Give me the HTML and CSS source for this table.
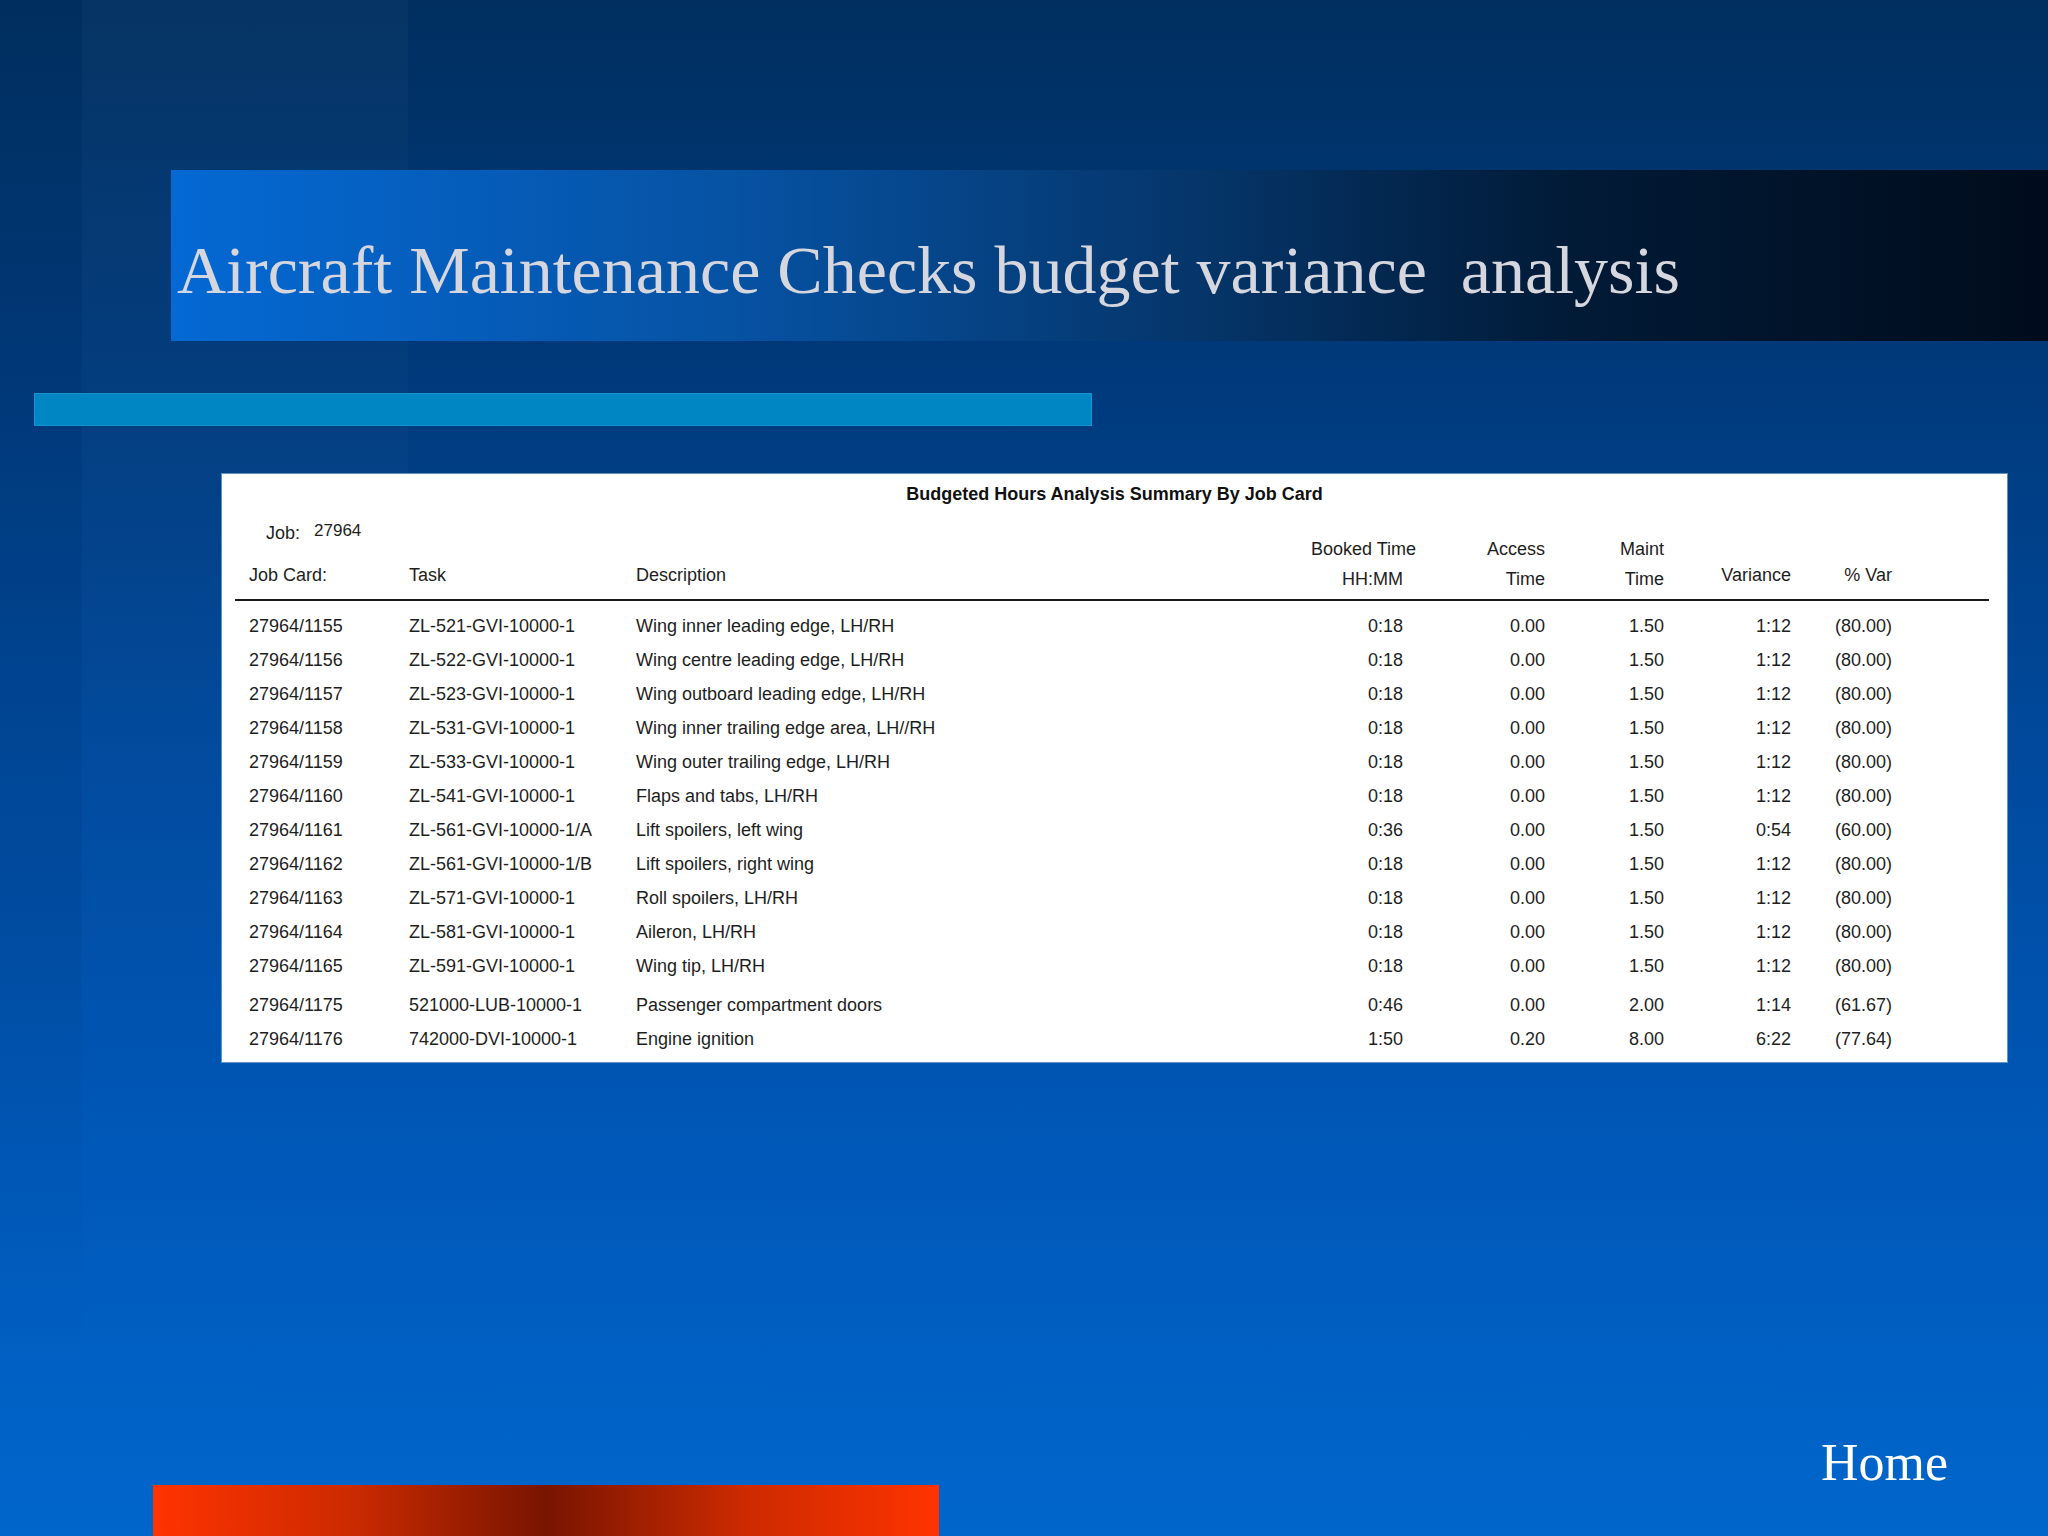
FILE: index.html
```html
<!DOCTYPE html>
<html>
<head>
<meta charset="utf-8">
<title>Aircraft Maintenance Checks budget variance analysis</title>
<link rel="stylesheet" href="styles.css">
</head>
<body>
<div class="slide">
  <div class="banner"><h1 class="title">Aircraft Maintenance Checks budget variance  analysis</h1></div>
  <div class="accent"></div>
  <div class="card">
    <div class="report-title">Budgeted Hours Analysis Summary By Job Card</div>
    <div class="head-grid">
      <div class="job"><span class="job-label">Job:</span><span class="job-no">27964</span></div>
      <div class="h1 c4 r"><span class="over">Booked Time</span></div>
      <div class="h1 c5 r">Access</div>
      <div class="h1 c6 r">Maint</div>
      <div class="h2 c1">Job Card:</div>
      <div class="h2 c2">Task</div>
      <div class="h2 c3">Description</div>
      <div class="h2 low c4 r">HH:MM</div>
      <div class="h2 low c5 r">Time</div>
      <div class="h2 low c6 r">Time</div>
      <div class="h2 c7 r">Variance</div>
      <div class="h2 c8 r">% Var</div>
    </div>
    <div class="rule"></div>
    <div class="rows">
      <div class="row"><span>27964/1155</span><span>ZL-521-GVI-10000-1</span><span>Wing inner leading edge, LH/RH</span><span class="r">0:18</span><span class="r">0.00</span><span class="r">1.50</span><span class="r">1:12</span><span class="r">(80.00)</span></div>
      <div class="row"><span>27964/1156</span><span>ZL-522-GVI-10000-1</span><span>Wing centre leading edge, LH/RH</span><span class="r">0:18</span><span class="r">0.00</span><span class="r">1.50</span><span class="r">1:12</span><span class="r">(80.00)</span></div>
      <div class="row"><span>27964/1157</span><span>ZL-523-GVI-10000-1</span><span>Wing outboard leading edge, LH/RH</span><span class="r">0:18</span><span class="r">0.00</span><span class="r">1.50</span><span class="r">1:12</span><span class="r">(80.00)</span></div>
      <div class="row"><span>27964/1158</span><span>ZL-531-GVI-10000-1</span><span>Wing inner trailing edge area, LH//RH</span><span class="r">0:18</span><span class="r">0.00</span><span class="r">1.50</span><span class="r">1:12</span><span class="r">(80.00)</span></div>
      <div class="row"><span>27964/1159</span><span>ZL-533-GVI-10000-1</span><span>Wing outer trailing edge, LH/RH</span><span class="r">0:18</span><span class="r">0.00</span><span class="r">1.50</span><span class="r">1:12</span><span class="r">(80.00)</span></div>
      <div class="row"><span>27964/1160</span><span>ZL-541-GVI-10000-1</span><span>Flaps and tabs, LH/RH</span><span class="r">0:18</span><span class="r">0.00</span><span class="r">1.50</span><span class="r">1:12</span><span class="r">(80.00)</span></div>
      <div class="row"><span>27964/1161</span><span>ZL-561-GVI-10000-1/A</span><span>Lift spoilers, left wing</span><span class="r">0:36</span><span class="r">0.00</span><span class="r">1.50</span><span class="r">0:54</span><span class="r">(60.00)</span></div>
      <div class="row"><span>27964/1162</span><span>ZL-561-GVI-10000-1/B</span><span>Lift spoilers, right wing</span><span class="r">0:18</span><span class="r">0.00</span><span class="r">1.50</span><span class="r">1:12</span><span class="r">(80.00)</span></div>
      <div class="row"><span>27964/1163</span><span>ZL-571-GVI-10000-1</span><span>Roll spoilers, LH/RH</span><span class="r">0:18</span><span class="r">0.00</span><span class="r">1.50</span><span class="r">1:12</span><span class="r">(80.00)</span></div>
      <div class="row"><span>27964/1164</span><span>ZL-581-GVI-10000-1</span><span>Aileron, LH/RH</span><span class="r">0:18</span><span class="r">0.00</span><span class="r">1.50</span><span class="r">1:12</span><span class="r">(80.00)</span></div>
      <div class="row"><span>27964/1165</span><span>ZL-591-GVI-10000-1</span><span>Wing tip, LH/RH</span><span class="r">0:18</span><span class="r">0.00</span><span class="r">1.50</span><span class="r">1:12</span><span class="r">(80.00)</span></div>
      <div class="row gap"><span>27964/1175</span><span>521000-LUB-10000-1</span><span>Passenger compartment doors</span><span class="r">0:46</span><span class="r">0.00</span><span class="r">2.00</span><span class="r">1:14</span><span class="r">(61.67)</span></div>
      <div class="row"><span>27964/1176</span><span>742000-DVI-10000-1</span><span>Engine ignition</span><span class="r">1:50</span><span class="r">0.20</span><span class="r">8.00</span><span class="r">6:22</span><span class="r">(77.64)</span></div>
    </div>
  </div>
  <div class="home-row"><span class="home">Home</span></div>
  <div class="redbar"></div>
</div>
</body>
</html>
```
FILE: styles.css
```css
html, body {
  margin: 0;
  padding: 0;
}
body {
  width: 2048px;
  height: 1536px;
  overflow: hidden;
}
.slide {
  width: 2048px;
  height: 1536px;
  overflow: hidden;
  display: flow-root;
  background:
    linear-gradient(to bottom, rgba(0,0,0,0.02), rgba(0,0,0,0.05) 60%, rgba(0,0,0,0) 90%) 0 0 / 82px 100% no-repeat,
    linear-gradient(to bottom, rgba(255,255,255,0.025), rgba(255,255,255,0.01) 40%, rgba(255,255,255,0) 70%) 82px 0 / 326px 100% no-repeat,
    linear-gradient(to bottom, #002f60 0%, #003a7c 25%, #004a9e 50%, #0058b8 75%, #0066cc 100%);
}
.banner {
  margin: 170px 0 0 171px;
  height: 171px;
  display: flex;
  align-items: center;
  background: linear-gradient(to right, #0469d4 0%, #0652a3 30%, #053569 55%, #011a36 75%, #000c1c 100%);
}
.title {
  margin: 0 0 0 6px;
  font-family: "Liberation Serif", "Times New Roman", serif;
  font-weight: normal;
  font-size: 68px;
  line-height: 80px;
  color: #d6d6de;
  white-space: pre;
  position: relative;
  top: 14px;
}
.accent {
  margin: 52px 0 0 34px;
  width: 1058px;
  height: 33px;
  background: #0086c3;
  box-shadow: inset 0 0 0 1px #1593cc;
}
.card {
  margin: 48px 0 0 222px;
  width: 1785px;
  height: 588px;
  box-sizing: border-box;
  background: #ffffff;
  box-shadow: 0 0 0 1px rgba(120,165,210,0.8);
  padding-top: 8px;
  font-family: "Liberation Sans", Arial, sans-serif;
  font-size: 18px;
  color: #1e1e1e;
}
.report-title {
  text-align: center;
  font-weight: bold;
  line-height: 24px;
  height: 24px;
  color: #111;
}
.head-grid,
.row {
  display: grid;
  grid-template-columns: 160px 227px 647px 120px 142px 119px 127px 101px;
  padding-left: 27px;
}
.head-grid {
  margin-top: 15px;
  grid-template-rows: 40px 38px;
  line-height: 24px;
}
.job {
  grid-column: 1 / 3;
  grid-row: 1;
  align-self: start;
  padding-left: 17px;
}
.job-label {
  margin-right: 14px;
}
.job-no {
  font-size: 17px;
  position: relative;
  top: -3px;
}
.h1 {
  grid-row: 1;
  align-self: end;
}
.h2 {
  grid-row: 2;
  align-self: start;
  margin-top: 2px;
}
.h2.low {
  margin-top: 6px;
}
.c1 { grid-column: 1; }
.c2 { grid-column: 2; }
.c3 { grid-column: 3; }
.c4 { grid-column: 4; }
.c5 { grid-column: 5; }
.c6 { grid-column: 6; }
.c7 { grid-column: 7; }
.c8 { grid-column: 8; }
.r {
  text-align: right;
}
.over {
  margin-right: -13px;
}
.rule {
  margin: 0 18px 0 13px;
  height: 2px;
  background: #1a1a1a;
}
.rows {
  margin-top: 8px;
}
.row {
  height: 34px;
  line-height: 34px;
  white-space: nowrap;
}
.row.gap {
  margin-top: 5px;
}
.home-row {
  margin-top: 379px;
  height: 44px;
  line-height: 44px;
  text-align: right;
  padding-right: 100px;
}
.home {
  font-family: "Liberation Serif", "Times New Roman", serif;
  font-size: 52px;
  color: #ffffff;
}
.redbar {
  margin-left: 153px;
  width: 786px;
  height: 51px;
  background: linear-gradient(to right, #ff3300 0%, #cc2a00 25%, #781500 50%, #cc2a00 75%, #ff3300 100%);
}
```
